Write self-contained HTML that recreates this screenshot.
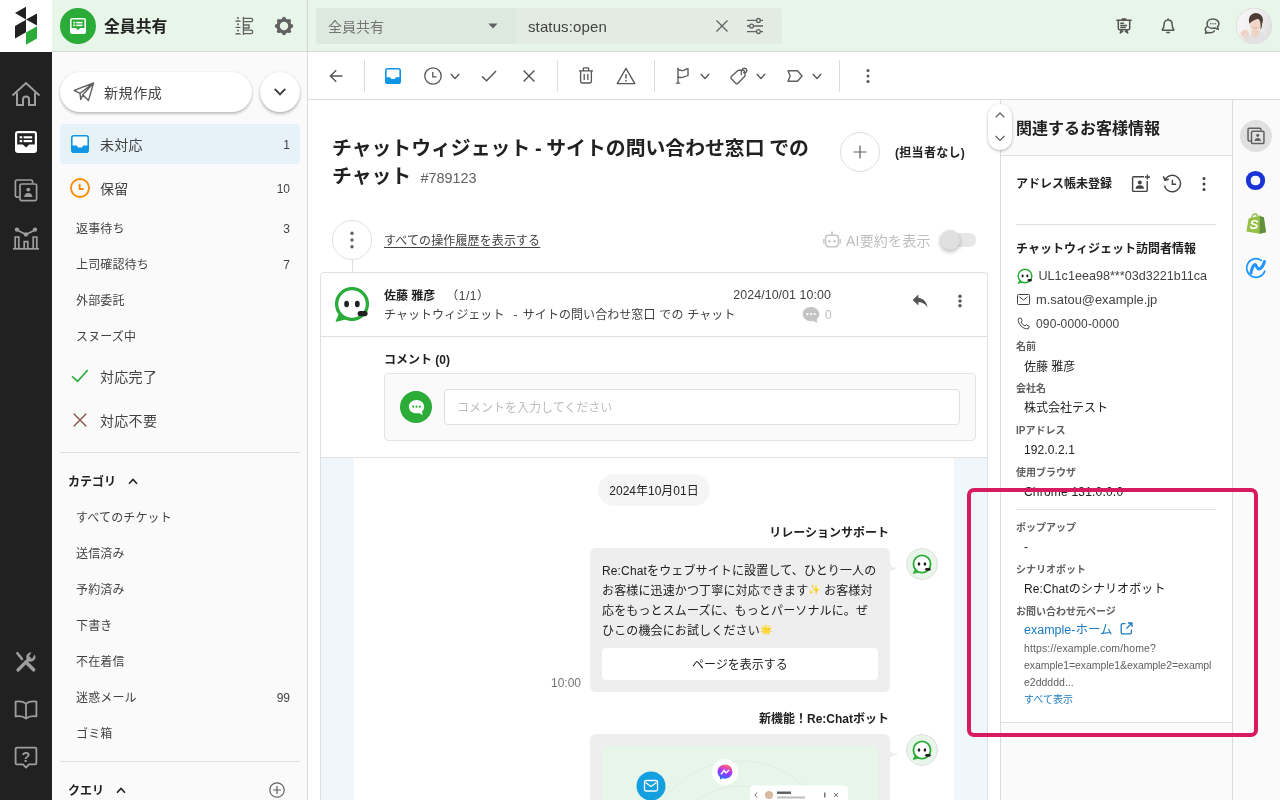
<!DOCTYPE html>
<html lang="ja">
<head>
<meta charset="utf-8">
<title>Re:lation</title>
<style>
*{box-sizing:border-box;margin:0;padding:0}
html,body{width:1280px;height:800px;overflow:hidden;background:#fff}
body{will-change:transform;font-family:"Liberation Sans","Noto Sans CJK JP",sans-serif;color:#212121;font-size:14px;position:relative}
.abs{position:absolute}
svg{display:block}
/* ---------- left rail ---------- */
#logo{left:0;top:0;width:52px;height:52px;background:#fff}
#rail{left:0;top:52px;width:52px;height:748px;background:#212121}
#rail svg{position:absolute;left:12px}
/* ---------- header ---------- */
#header{left:52px;top:0;width:1228px;height:52px;background:#e8f5e9;border-bottom:1px solid #d6d6d6}
#hdiv{left:307px;top:0;width:1px;height:52px;background:#d6d6d6}
#mbx-circle{left:60px;top:8px;width:36px;height:36px;border-radius:50%;background:#2bac38}
#mbx-name{left:104px;top:15px;font-size:15.850px;font-weight:700;line-height:24px;color:#212121}
#search{left:316px;top:8px;width:466px;height:36px;border-radius:4px;background:#e2ece3}
#search .sel{position:absolute;left:0;top:0;width:200px;height:36px;background:#dde8de;border-radius:4px 0 0 4px}
#search .sel span{position:absolute;left:12px;top:8px;font-size:14px;line-height:22px;color:#757575}
#search .q{position:absolute;left:212px;top:8px;font-size:15px;line-height:22px;color:#424242;letter-spacing:.12px}
/* ---------- sidebar ---------- */
#side{left:52px;top:52px;width:256px;height:748px;background:#fafafa;border-right:1px solid #dcdcdc}
#compose{left:8px;top:20px;width:192px;height:40px;border-radius:20px;background:#fff;box-shadow:0 2px 3px rgba(0,0,0,.22),0 0 2px rgba(0,0,0,.10)}
#compose span{position:absolute;left:44px;top:9.500px;font-size:14px;line-height:22px;color:#424242;letter-spacing:.6px}
#compose2{left:208px;top:20px;width:40px;height:40px;border-radius:50%;background:#fff;box-shadow:0 2px 3px rgba(0,0,0,.25),0 0 2px rgba(0,0,0,.10)}
.nav{position:absolute;left:8px;width:240px;height:40px;border-radius:4px}
.nav.sel{background:#e6f1f8}
.nav .t{position:absolute;left:40px;top:9.500px;font-size:14px;line-height:22px;color:#424242;letter-spacing:.3px}
.nav .c,.sub .c{position:absolute;right:10px;font-size:12px;color:#424242}
.nav .c{top:12px;line-height:18px}
.nav svg{position:absolute;left:8px;top:8px}
.sub{position:absolute;left:8px;width:240px;height:36px}
.sub .t{position:absolute;left:16px;top:9px;font-size:12px;letter-spacing:.15px;line-height:20px;color:#424242}
.sub .c{top:10px;line-height:18px}
.hr{position:absolute;left:8px;width:240px;height:1px;background:#e0e0e0}
.sec{position:absolute;left:16px;margin-top:1px;font-size:12px;font-weight:700;line-height:20px;color:#212121}
/* ---------- toolbar ---------- */
#tbar{left:308px;top:52px;width:972px;height:48px;background:#fff;border-bottom:1px solid #dcdcdc}
#tbar .v{position:absolute;top:8px;width:1px;height:32px;background:#dcdcdc}
#tbar svg{position:absolute}
/* ---------- main ---------- */
#main{left:308px;top:100px;width:693px;height:700px;background:#fff;overflow:hidden}
#title{left:24px;top:34px;width:500px;font-size:19.850px;word-spacing:-.8px;font-weight:700;line-height:28px;color:#212121}
#title small{font-size:14.400px;font-weight:400;color:#616161;margin-left:4.600px}

/* main details (coords relative to #main: left 308, top 100) */
#kebab{left:24px;top:120px;width:40px;height:40px;border:1px solid #e0e0e0;border-radius:50%;background:#fff}
#kline{left:44px;top:160px;width:1px;height:12px;background:#e0e0e0}
#hist{left:76px;top:132px;font-size:12px;letter-spacing:.12px;line-height:18px;color:#424242;text-decoration:underline;text-underline-offset:2px}
#plus{left:532px;top:32px;width:40px;height:40px;border:1px solid #e0e0e0;border-radius:50%;background:#fff}
#assignee{left:587px;top:44px;letter-spacing:.3px;font-size:12px;font-weight:700;line-height:18px;color:#212121;white-space:nowrap}
#ai{left:538px;top:130px;letter-spacing:.2px;font-size:14px;line-height:22px;color:#bdbdbd;white-space:nowrap}
#tog{left:632px;top:133px;width:36px;height:14px;border-radius:7px;background:#e6e6e6}
#knob{left:632px;top:130px;width:20px;height:20px;border-radius:50%;background:#e0e0e0;box-shadow:0 2px 4px rgba(0,0,0,.28)}
#card{left:12px;top:172px;width:668px;height:560px;border:1px solid #e0e0e0;border-radius:4px;background:#fff;overflow:hidden}
#card .hd{position:absolute;left:0;top:0;width:666px;height:64px;border-bottom:1px solid #e0e0e0}
#card .nm{position:absolute;left:63px;top:14px;font-size:12px;font-weight:700;line-height:18px;color:#212121;white-space:nowrap}
#card .nm i{font-style:normal;font-weight:400;color:#424242;margin-left:11px;letter-spacing:.5px}
#card .sj{position:absolute;left:63px;top:33px;letter-spacing:.06px;word-spacing:.5px;font-size:12px;line-height:18px;color:#424242;white-space:pre}
#card .dt{position:absolute;right:156px;top:13px;letter-spacing:.08px;font-size:12.400px;line-height:18px;color:#424242;white-space:nowrap}
#card .cn{position:absolute;left:504px;top:33px;font-size:12px;line-height:18px;color:#bdbdbd}
#card .cm{position:absolute;left:0;top:64px;width:666px;height:121px;border-bottom:1px solid #e0e0e0}
#card .cm b{position:absolute;left:63px;top:14px;font-size:12px;line-height:18px;color:#212121}
#cbox{left:63px;top:36px;width:592px;height:68px;border:1px solid #e4e4e4;border-radius:4px;background:#fafafa}
#cbox .g{position:absolute;left:15px;top:17px;width:32px;height:32px;border-radius:50%;background:#2bac38}
#cbox .in{position:absolute;left:59px;top:15px;width:516px;height:36px;border:1px solid #e0e0e0;border-radius:4px;background:#fff}
#cbox .in span{position:absolute;left:12px;top:9px;font-size:12px;line-height:18px;color:#bdbdbd}
#chat{left:0;top:185px;width:666px;height:380px;background:#eff7fd}
#chat .w{position:absolute;left:33px;top:0;width:600px;height:380px;background:#fff}
.pill{position:absolute;left:244px;top:16px;width:112px;height:32px;padding-top:1px;border-radius:16px;background:#f5f5f5;font-size:12px;line-height:32px;text-align:center;color:#212121}
.who{position:absolute;right:65px;margin-top:1px;font-size:12px;font-weight:700;line-height:18px;color:#212121;white-space:nowrap}
.bub{position:absolute;left:236px;width:300px;background:#eeeeee;border-radius:6px}
.bub p{position:absolute;left:12px;top:13px;width:280px;letter-spacing:.14px;font-size:12px;line-height:20px;color:#212121;white-space:nowrap}
.bub .btn{position:absolute;left:12px;top:100px;width:276px;height:32px;padding-top:1px;border-radius:4px;background:#fff;font-size:12px;line-height:32px;text-align:center;color:#212121}
.tm{position:absolute;left:197px;margin-top:1px;font-size:12px;line-height:18px;color:#757575}
.av{position:absolute;left:552px;width:32px;height:32px;border-radius:50%;background:#e8f5e9;border:1px solid #e0e0e0}
.em{font-size:10px;line-height:0;position:relative;top:-2px}
#pill2{left:988px;top:104px;width:24px;height:46px;border-radius:12px;background:#fff;box-shadow:0 1px 3px rgba(0,0,0,.3)}
/* ---------- right panel ---------- */
#rp{left:1000px;top:100px;width:233px;height:700px;background:#fafafa;border-left:1px solid #dcdcdc;border-right:1px solid #dcdcdc;overflow:hidden}
#rrail{left:1233px;top:100px;width:47px;height:700px;background:#fafafa}
.lbl{position:absolute;left:15px;margin-top:2px;font-size:10px;font-weight:700;line-height:14px;color:#616161}
.val{position:absolute;left:23px;margin-top:2px;font-size:12px;line-height:18px;color:#212121}

#rp .h{position:absolute;left:0;top:0;width:231px;height:56px;background:#fafafa;border-bottom:1px solid #e0e0e0}
#rp .h span{position:absolute;left:15px;top:17px;font-size:16px;font-weight:700;line-height:24px;color:#212121}
#rp .b{position:absolute;left:0;top:56px;width:231px;height:567px;background:#fff;border-bottom:1px solid #e0e0e0}
#rp .st{position:absolute;left:15px;margin-top:1.500px;font-size:12px;font-weight:700;line-height:18px;color:#212121;white-space:nowrap}
#rp .dv{position:absolute;left:15px;margin-top:1px;width:200px;height:1px;background:#e0e0e0}
#rp .row{position:absolute;left:35px;margin-top:2px;font-size:12px;line-height:18px;color:#424242;white-space:nowrap}
#rp svg{position:absolute;margin-top:1px}
#rp .lnk{position:absolute;left:23px;margin-top:2px;font-size:12.500px;line-height:18px;color:#1a7bc0;white-space:nowrap}
#rp .url{position:absolute;left:23px;top:484px;width:196px;font-size:10.500px;line-height:17.200px;color:#616161;white-space:nowrap}
#rp .all{position:absolute;left:23px;margin-top:2px;font-size:10px;line-height:14px;color:#1a7bc0}
#rrail svg{position:absolute}
#rrail .act{position:absolute;left:7px;top:20px;width:32px;height:32px;border-radius:50%;background:#e0e0e0}
#hl{left:967px;top:488px;width:291px;height:249px;border:4px solid #d81b60;border-radius:7px}
</style>
</head>
<body>
<!-- LOGO -->
<div id="logo" class="abs">
<svg width="52" height="52" viewBox="0 0 52 52">
<polygon points="15,13 26,6.8 26,19.5" fill="#212121"/>
<polygon points="26,19.6 37,13.4 37,25.4" fill="#212121"/>
<polygon points="15,26 26,19.8 26,32.2 15,38.4" fill="#212121"/>
<polygon points="26,32.5 37,26.3 37,38.5 26,44.7" fill="#2bac38"/>
</svg>
</div>
<div id="rail" class="abs">
<!-- home -->
<svg style="left:10px;top:28px" width="32" height="28" viewBox="0 0 32 28" fill="none" stroke="#9e9e9e" stroke-width="2" stroke-linejoin="miter">
<path d="M2.5 15.5 L16 3 L29.5 15.5"/><path d="M7 12.5 V25 H13 V19.5 a3 3 0 0 1 6 0 V25 H25 V12.5"/></svg>
<!-- inbox active -->
<svg style="left:15px;top:79px" width="22" height="22" viewBox="0 0 22 22">
<rect x="0" y="0" width="22" height="22" rx="3" fill="#fff"/>
<path d="M2.2 2.2 H19.8 V13.6 H14.2 L11 16.4 L7.8 13.6 H2.2 Z" fill="#212121"/>
<rect x="4.6" y="5.2" width="2.6" height="2.2" fill="#fff"/><rect x="8.6" y="5.2" width="8.6" height="2.2" fill="#fff"/>
<rect x="4.6" y="9" width="2.6" height="2.2" fill="#fff"/><rect x="8.6" y="9" width="8.6" height="2.2" fill="#fff"/>
</svg>
<!-- contacts -->
<svg style="left:14px;top:127px" width="24" height="23" viewBox="0 0 24 23" fill="none" stroke="#9e9e9e" stroke-width="1.7">
<path d="M5 18.2 H3 a1.6 1.6 0 0 1 -1.6 -1.6 V2.6 A1.6 1.6 0 0 1 3 1 H17 a1.6 1.6 0 0 1 1.6 1.6 V4"/>
<rect x="6" y="5" width="16.6" height="16.6" rx="1.6"/>
<circle cx="14.3" cy="10.6" r="1.9" fill="#9e9e9e" stroke="none"/><path d="M10.2 18 c0-2.6 1.8-4 4.1-4 s4.1 1.4 4.1 4 z" fill="#9e9e9e" stroke="none"/></svg>
<!-- analytics -->
<svg style="left:12px;top:174px" width="28" height="24" viewBox="0 0 28 24" fill="none" stroke="#9e9e9e" stroke-width="1.7">
<path d="M1 22.8 H27"/><path d="M5 4 L14 8.6 L23 4"/>
<circle cx="5" cy="3.6" r="2.2" fill="#9e9e9e" stroke="none"/><circle cx="14" cy="8.4" r="2.2" fill="#9e9e9e" stroke="none"/><circle cx="23" cy="3.6" r="2.2" fill="#9e9e9e" stroke="none"/>
<path d="M3.2 22 V11 H6.8 V22 M12.2 22 V15.6 H15.8 V22 M21.2 22 V11 H24.8 V22"/></svg>
<!-- tools -->
<svg style="left:15px;top:599px" width="22" height="22" viewBox="0 0 22 22" fill="none" stroke="#9e9e9e" stroke-linecap="round">
<path d="M3 19 L13.5 8.5" stroke-width="3.2"/><path d="M19.6 3.4 a4.6 4.6 0 1 1 -3 -1.9 L14 5 L17 8 Z" fill="#9e9e9e" stroke="none"/>
<path d="M2.4 2.2 L7 8" stroke-width="2.6"/><path d="M12.6 12.8 L18.6 18.8" stroke-width="3.6"/></svg>
<!-- book -->
<svg style="left:14px;top:647px" width="24" height="22" viewBox="0 0 24 22" fill="none" stroke="#9e9e9e" stroke-width="1.8" stroke-linejoin="round">
<path d="M12 4.6 C9.6 2.6 5.4 2 1.6 2.6 V17.4 C5.4 16.8 9.6 17.4 12 19.6 C14.4 17.4 18.6 16.8 22.4 17.4 V2.6 C18.6 2 14.4 2.6 12 4.6 Z M12 4.6 V19.6"/></svg>
<!-- help -->
<svg style="left:14px;top:694px" width="24" height="24" viewBox="0 0 24 24" fill="none" stroke="#9e9e9e" stroke-width="1.8" stroke-linejoin="round">
<path d="M3 1.6 H21 a1.4 1.4 0 0 1 1.4 1.4 V17 a1.4 1.4 0 0 1 -1.4 1.4 H15 L12 21.6 L9 18.4 H3 a1.4 1.4 0 0 1 -1.4 -1.4 V3 A1.4 1.4 0 0 1 3 1.6 Z"/>
<text x="12" y="15.500" text-anchor="middle" font-family="Liberation Sans, sans-serif" font-size="14.500" font-weight="700" fill="#9e9e9e" stroke="none">?</text></svg>
</div>
<div id="header" class="abs"></div>
<div id="hdiv" class="abs"></div>
<div id="mbx-circle" class="abs">
<svg style="position:absolute;left:10px;top:10px" width="16" height="16" viewBox="0 0 22 22">
<rect x="0" y="0" width="22" height="22" rx="3" fill="#fff"/>
<path d="M2.2 2.2 H19.8 V13.6 H14.2 L11 16.4 L7.8 13.6 H2.2 Z" fill="#2bac38"/>
<rect x="4.6" y="5.2" width="2.6" height="2.2" fill="#fff"/><rect x="8.6" y="5.2" width="8.6" height="2.2" fill="#fff"/>
<rect x="4.6" y="9" width="2.6" height="2.2" fill="#fff"/><rect x="8.6" y="9" width="8.6" height="2.2" fill="#fff"/>
</svg></div>
<div id="mbx-name" class="abs">全員共有</div>
<!-- sort icon -->
<svg class="abs" style="left:234px;top:16px" width="20" height="20" viewBox="0 0 20 20" fill="none" stroke="#616161" stroke-width="1.300">
<path d="M9.400 0.800 V19"/><path d="M10 2.300 H17 a1.700 1.700 0 0 1 0 3.400 H10"/><path d="M10 9 H15 V12 H10"/><path d="M10 14.200 H17 a1.700 1.700 0 0 1 0 3.400 H10"/>
<g fill="#616161" stroke="none"><circle cx="4" cy="1.900" r="1"/><path d="M1 5.700 C1.400 3.800 6.600 3.800 7 5.700 Z"/><circle cx="4" cy="8.300" r="1"/><path d="M1 12.100 C1.400 10.200 6.600 10.200 7 12.100 Z"/><circle cx="4" cy="14.600" r="1"/><path d="M1 18.400 C1.400 16.500 6.600 16.500 7 18.400 Z"/></g></svg>
<!-- gear -->
<svg class="abs" style="left:274px;top:16px" width="20" height="20" viewBox="0 0 20 20"><circle cx="10" cy="10" r="5.900" fill="none" stroke="#616161" stroke-width="3.400"/><g fill="#616161"><circle cx="10.00" cy="2.70" r="1.900"/><circle cx="15.16" cy="4.84" r="1.900"/><circle cx="17.30" cy="10.00" r="1.900"/><circle cx="15.16" cy="15.16" r="1.900"/><circle cx="10.00" cy="17.30" r="1.900"/><circle cx="4.84" cy="15.16" r="1.900"/><circle cx="2.70" cy="10.00" r="1.900"/><circle cx="4.84" cy="4.84" r="1.900"/></g></svg>
<div id="search" class="abs"><div class="sel"><span>全員共有</span>
<svg style="position:absolute;left:172px;top:15px" width="10" height="6" viewBox="0 0 10 6"><path d="M0.4 0.4 H9.6 L5 5.4 Z" fill="#616161"/></svg></div><div class="q">status:open</div>
<svg style="position:absolute;left:399px;top:11px" width="14" height="14" viewBox="0 0 14 14" fill="none" stroke="#616161" stroke-width="1.3"><path d="M1.5 1.5 L12.5 12.5 M12.5 1.5 L1.5 12.5"/></svg>
<svg style="position:absolute;left:430px;top:9px" width="18" height="18" viewBox="0 0 18 18" fill="none" stroke="#616161" stroke-width="1.3"><path d="M1 3.4 H17 M1 9 H17 M1 14.6 H17"/><circle cx="12.4" cy="3.4" r="1.9" fill="#e2ece3"/><circle cx="5.6" cy="9" r="1.9" fill="#e2ece3"/><circle cx="12.4" cy="14.6" r="1.9" fill="#e2ece3"/></svg>
</div>
<!-- presentation -->
<svg class="abs" style="left:1116px;top:18px" width="16" height="16" viewBox="0 0 18 18" fill="none" stroke="#555" stroke-width="1.7" stroke-linejoin="round" stroke-linecap="round">
<path d="M1 2.6 H17 M7 1 H11"/><path d="M2.6 2.8 V11.6 a1.6 1.6 0 0 0 1.6 1.6 H13.800 a1.600 1.600 0 0 0 1.600 -1.600 V2.800"/><path d="M5.400 6 H8.400 M5.400 8.400 H11.800 M5.400 10.800 H10.400"/><path d="M6.200 13.400 L4.800 16.800 L7.400 15 M11.800 13.400 L13.200 16.800 L10.600 15"/></svg>
<!-- bell -->
<svg class="abs" style="left:1161px;top:18px" width="14.2" height="16" viewBox="0 0 16 18" fill="none" stroke="#555" stroke-width="1.7" stroke-linejoin="round" stroke-linecap="round">
<path d="M8 1.200 V2.200 M8 2.200 C4.800 2.200 3.400 4.800 3.400 7.400 C3.400 10.600 2.600 12 1.600 13 V13.800 H14.400 V13 C13.400 12 12.600 10.600 12.600 7.400 C12.600 4.800 11.200 2.200 8 2.200 Z M6.600 16.400 H9.400"/></svg>
<!-- chat -->
<svg class="abs" style="left:1204px;top:18px" width="16" height="16" viewBox="0 0 18 18" fill="none" stroke="#555" stroke-width="1.7" stroke-linejoin="round" stroke-linecap="round">
<path d="M10 1.200 C6 1.200 3.400 3.600 3.400 6.400 C3.400 9.200 6 11.600 10 11.600 C10.800 11.600 11.600 11.500 12.300 11.300 L16 12.800 L15.200 9.800 C16.200 8.900 16.800 7.700 16.800 6.400 C16.800 3.600 14 1.200 10 1.200 Z"/>
<path d="M3.600 9.600 C2.200 10.400 1.400 11.600 1.400 12.900 C1.400 13.800 1.800 14.600 2.400 15.300 L1.600 17.200 L4.600 16.400 C5.300 16.600 6 16.700 6.800 16.700 C9 16.700 10.800 15.900 11.600 14.400"/>
<circle cx="7.400" cy="6.400" r="0.900" fill="#616161" stroke="none"/><circle cx="10.100" cy="6.400" r="0.900" fill="#616161" stroke="none"/><circle cx="12.800" cy="6.400" r="0.900" fill="#616161" stroke="none"/></svg>
<!-- avatar -->
<svg class="abs" style="left:1236px;top:8px" width="36" height="36" viewBox="0 0 36 36">
<defs><clipPath id="avc"><circle cx="18" cy="18" r="17.400"/></clipPath><linearGradient id="avg" x1="0" y1="0" x2="1" y2="0.300"><stop offset="0" stop-color="#f6f6f6"/><stop offset="0.550" stop-color="#f1f1f1"/><stop offset="1" stop-color="#e2e2e2"/></linearGradient><filter id="avb" x="-10%" y="-10%" width="120%" height="120%"><feGaussianBlur stdDeviation="0.550"/></filter></defs>
<circle cx="18" cy="18" r="18" fill="#dcd6d8"/>
<g clip-path="url(#avc)"><rect width="36" height="36" fill="url(#avg)"/>
<g filter="url(#avb)">
<path d="M6 36 C7 29 11 26.500 15.500 25.500 L19.500 30 L23.500 24.800 C28 25.800 31 29 32 36 Z" fill="#e3e1e4"/>
<path d="M15.200 22 L23.600 22 L23.600 25.500 L19.500 30.400 L15.400 26 Z" fill="#efd3c3"/>
<ellipse cx="19.900" cy="12" rx="7.100" ry="6.900" fill="#4e3c35"/>
<ellipse cx="19.200" cy="16.400" rx="5.500" ry="6.600" fill="#f0d6c8"/>
<path d="M13.300 13.400 C14.500 9.200 20.500 7.200 26 10.600 C23.500 10.200 18.500 11 13.600 15.400 Z" fill="#4e3c35"/>
<path d="M24.600 13 C26.600 15 26.400 19.500 24.400 21.600 C24.800 19 24.800 16 24.600 13 Z" fill="#4e3c35"/>
<path d="M16.800 19.400 C18.200 20.600 20.400 20.600 21.800 19.400" fill="none" stroke="#d89a8c" stroke-width="0.700"/>
<ellipse cx="8.800" cy="25.600" rx="4.200" ry="3.600" transform="rotate(-35 8.800 25.600)" fill="#efd3c3"/>
<path d="M7 28 C8 30 10 32 12.500 33 L14 30 C12 28.500 11 27 10.500 25.500 Z" fill="#e9dcd8"/>
</g></g></svg>
<div id="side" class="abs">
<div id="compose" class="abs"><svg style="position:absolute;left:13px;top:10px" width="22" height="20" viewBox="0 0 22 20" fill="none" stroke="#616161" stroke-width="1.400" stroke-linejoin="round"><path d="M1.200 8.400 L20.600 1 L15.400 18.600 L9.800 12.800 L7.800 17.600 L7 11.400 Z M7 11.400 L20.600 1 L9.800 12.800"/></svg><span>新規作成</span></div>
<div id="compose2" class="abs"><svg style="position:absolute;left:14px;top:16px" width="12" height="8" viewBox="0 0 12 8" fill="none" stroke="#424242" stroke-width="1.900"><path d="M0.800 1 L6 6.400 L11.200 1"/></svg></div>
<div class="nav sel" style="top:72px"><svg style="left:11px;top:11px" width="18" height="18" viewBox="0 0 18 18"><rect x="0.800" y="0.800" width="16.400" height="16.400" rx="2" fill="#fff" stroke="#1096e4" stroke-width="1.600"/><path d="M0.800 10.400 H5.600 L7.200 12.400 H10.800 L12.400 10.400 H17.200 V15.200 a2 2 0 0 1 -2 2 H2.800 a2 2 0 0 1 -2 -2 Z" fill="#1096e4"/></svg><span class="t">未対応</span><span class="c">1</span></div>
<div class="nav" style="top:116px"><svg style="left:10px;top:10px" width="20" height="20" viewBox="0 0 20 20" fill="none" stroke="#fb8c00" stroke-width="1.900"><circle cx="10" cy="10" r="9"/><path d="M9.600 5.800 V11 H13.600" stroke-width="1.900"/></svg><span class="t">保留</span><span class="c">10</span></div>
<div class="sub" style="top:158px"><span class="t">返事待ち</span><span class="c">3</span></div>
<div class="sub" style="top:194px"><span class="t">上司確認待ち</span><span class="c">7</span></div>
<div class="sub" style="top:230px"><span class="t">外部委託</span></div>
<div class="sub" style="top:266px"><span class="t">スヌーズ中</span></div>
<div class="nav" style="top:304px"><svg style="left:11px;top:13px" width="18" height="14" viewBox="0 0 18 14" fill="none" stroke="#2bac38" stroke-width="1.700"><path d="M1 7.400 L6.600 12.400 L16.800 1"/></svg><span class="t">対応完了</span></div>
<div class="nav" style="top:348px"><svg style="left:13px;top:13px" width="14" height="14" viewBox="0 0 14 14" fill="none" stroke="#8d5a4a" stroke-width="1.500"><path d="M0.800 0.800 L13.200 13.200 M13.200 0.800 L0.800 13.200"/></svg><span class="t">対応不要</span></div>
<div class="hr" style="top:400px"></div>
<div class="sec" style="top:419px">カテゴリ<svg style="display:inline-block;margin-left:12px;vertical-align:1px" width="10" height="7" viewBox="0 0 10 7" fill="none" stroke="#212121" stroke-width="1.600"><path d="M1 5.800 L5 1.400 L9 5.800"/></svg></div>
<div class="sub" style="top:447px"><span class="t">すべてのチケット</span></div>
<div class="sub" style="top:483px"><span class="t">送信済み</span></div>
<div class="sub" style="top:519px"><span class="t">予約済み</span></div>
<div class="sub" style="top:555px"><span class="t">下書き</span></div>
<div class="sub" style="top:591px"><span class="t">不在着信</span></div>
<div class="sub" style="top:627px"><span class="t">迷惑メール</span><span class="c">99</span></div>
<div class="sub" style="top:663px"><span class="t">ゴミ箱</span></div>
<div class="hr" style="top:709px"></div>
<div class="sec" style="top:728px">クエリ<svg style="display:inline-block;margin-left:12px;vertical-align:1px" width="10" height="7" viewBox="0 0 10 7" fill="none" stroke="#212121" stroke-width="1.600"><path d="M1 5.800 L5 1.400 L9 5.800"/></svg></div>
<svg class="abs" style="left:217px;top:730px" width="16" height="16" viewBox="0 0 16 16" fill="none" stroke="#616161" stroke-width="1.200"><circle cx="8" cy="8" r="7.200"/><path d="M8 4 V12 M4 8 H12"/></svg>
</div>
<div id="tbar" class="abs">
<svg style="left:21px;top:17px" width="14" height="14" viewBox="0 0 14 14" fill="none" stroke="#555" stroke-width="1.400"><path d="M13.400 7 H1.600 M7.200 1.200 L1.400 7 L7.200 12.800"/></svg>
<div class="v" style="left:56px"></div>
<svg style="left:77px;top:16px" width="16" height="16" viewBox="0 0 18 18"><rect x="0.900" y="0.900" width="16.200" height="16.200" rx="2" fill="#fff" stroke="#1096e4" stroke-width="1.800"/><path d="M0.900 10.400 H5.600 L7.200 12.400 H10.800 L12.400 10.400 H17.100 V15.100 a2 2 0 0 1 -2 2 H2.900 a2 2 0 0 1 -2 -2 Z" fill="#1096e4"/></svg>
<svg style="left:116px;top:15px" width="18" height="18" viewBox="0 0 18 18" fill="none" stroke="#555" stroke-width="1.300"><circle cx="9" cy="9" r="8.200"/><path d="M8.800 5 V9.800 H12.600"/></svg>
<svg style="left:142px;top:21px" width="10" height="7" viewBox="0 0 10 7" fill="none" stroke="#555" stroke-width="1.400"><path d="M0.800 1 L5 5.400 L9.200 1"/></svg>
<svg style="left:173px;top:18px" width="16" height="12" viewBox="0 0 16 12" fill="none" stroke="#555" stroke-width="1.400"><path d="M1 6.400 L5.600 10.800 L15 1"/></svg>
<svg style="left:215px;top:18px" width="12" height="12" viewBox="0 0 12 12" fill="none" stroke="#555" stroke-width="1.400"><path d="M0.600 0.600 L11.400 11.400 M11.400 0.600 L0.600 11.400"/></svg>
<div class="v" style="left:249px"></div>
<svg style="left:270px;top:15px" width="16" height="17" viewBox="0 0 16 17" fill="none" stroke="#555" stroke-width="1.300" stroke-linejoin="round"><path d="M1 3.800 H15 M5.400 3.600 V1.600 a0.800 0.800 0 0 1 0.800 -0.800 H9.800 a0.800 0.800 0 0 1 0.800 0.800 V3.600 M2.600 4 V14.600 a1.400 1.400 0 0 0 1.400 1.400 H12 a1.400 1.400 0 0 0 1.400 -1.400 V4 M6.200 7 V13 M9.800 7 V13"/></svg>
<svg style="left:308px;top:15px" width="20" height="18" viewBox="0 0 20 18" fill="none" stroke="#555" stroke-width="1.300" stroke-linejoin="round"><path d="M10 1.400 L18.800 16.600 H1.200 Z"/><path d="M10 7.200 V11.400" stroke-width="1.500"/><circle cx="10" cy="13.800" r="0.900" fill="#555" stroke="none"/></svg>
<div class="v" style="left:346px"></div>
<svg style="left:367px;top:15px" width="15" height="17" viewBox="0 0 15 17" fill="none" stroke="#5f5f5f" stroke-width="1.400" stroke-linejoin="round" stroke-linecap="round"><path d="M3 1.200 V16 M1.300 16.100 H4.700"/><path d="M3 2.400 C5 3.400 7 4 8.500 3.400 C10 2.800 11.500 2 13 1.800 V8.600 C11.500 8.800 10 9.600 8.500 10.200 C7 10.800 5 10.600 3 10"/></svg>
<svg style="left:392px;top:21px" width="10" height="7" viewBox="0 0 10 7" fill="none" stroke="#555" stroke-width="1.400"><path d="M0.800 1 L5 5.400 L9.200 1"/></svg>
<svg style="left:422px;top:15px" width="19" height="18" viewBox="0 0 19 18" fill="none" stroke="#5f5f5f" stroke-width="1.400" stroke-linejoin="round" stroke-linecap="round"><path d="M1.400 9.600 L7.600 3.800 Q8.200 3.300 9 3.300 H13.200 Q14.300 3.300 14.500 4.400 L15.100 8 Q15.200 8.800 14.600 9.400 L7.600 16.400 Q6.800 17.200 6 16.400 L1.400 11.800 Q0.400 10.700 1.400 9.600 Z"/><path d="M11.400 7.600 C10.600 4.600 12.200 1.200 14.600 1.200 C16.600 1.200 17.300 3.200 16.500 4.600 C15.900 5.700 14.700 6 13.700 5.500"/></svg>
<svg style="left:448px;top:21px" width="10" height="7" viewBox="0 0 10 7" fill="none" stroke="#555" stroke-width="1.400"><path d="M0.800 1 L5 5.400 L9.200 1"/></svg>
<svg style="left:479px;top:18px" width="16" height="12" viewBox="0 0 16 12" fill="none" stroke="#5f5f5f" stroke-width="1.400" stroke-linejoin="round"><path d="M1 0.800 H10.600 L15 6 L10.600 11.200 H1 L3.200 6 Z"/></svg>
<svg style="left:504px;top:21px" width="10" height="7" viewBox="0 0 10 7" fill="none" stroke="#555" stroke-width="1.400"><path d="M0.800 1 L5 5.400 L9.200 1"/></svg>
<div class="v" style="left:531px"></div>
<svg style="left:558px;top:16px" width="4" height="16" viewBox="0 0 4 16" fill="#555"><circle cx="2" cy="2.600" r="1.500"/><circle cx="2" cy="8" r="1.500"/><circle cx="2" cy="13.400" r="1.500"/></svg>
</div>
<div id="main" class="abs">
<div id="title" class="abs">チャットウィジェット - サイトの問い合わせ窓口 での<br>チャット <small>#789123</small></div>
<div id="plus" class="abs"><svg style="position:absolute;left:12px;top:12px" width="14" height="14" viewBox="0 0 14 14" fill="none" stroke="#616161" stroke-width="1.200"><path d="M7 0.500 V13.500 M0.500 7 H13.500"/></svg></div>
<div id="assignee" class="abs">(担当者なし)</div>
<div id="kebab" class="abs"><svg style="position:absolute;left:17px;top:10px" width="4" height="18" viewBox="0 0 4 18" fill="#616161"><circle cx="2" cy="2.300" r="1.700"/><circle cx="2" cy="9" r="1.700"/><circle cx="2" cy="15.700" r="1.700"/></svg></div>
<div id="kline" class="abs"></div>
<div id="hist" class="abs">すべての操作履歴を表示する</div>
<svg class="abs" style="left:515px;top:131px" width="18" height="18" viewBox="0 0 18 18" fill="none" stroke="#c4c4c4" stroke-width="1.400"><path d="M9 0.800 V4"/><circle cx="9" cy="1.400" r="1" fill="#c4c4c4" stroke="none"/><rect x="2.600" y="4.200" width="12.800" height="11.600" rx="3"/><path d="M0.800 8 V12.400 M17.200 8 V12.400"/><circle cx="6.400" cy="10.200" r="1.200" fill="#c4c4c4" stroke="none"/><circle cx="11.600" cy="10.200" r="1.200" fill="#c4c4c4" stroke="none"/></svg>
<div id="ai" class="abs">AI要約を表示</div>
<div id="tog" class="abs"></div><div id="knob" class="abs"></div>
<div id="card" class="abs">
<div class="hd">
<div style="position:absolute;left:13px;top:13px"><svg width="36" height="36" viewBox="0 0 36 36"><path d="M6.200 26.500 L2.400 35 L13.500 32.200 Z" fill="#2bac38" stroke="#2bac38" stroke-width="1.400" stroke-linejoin="round"/><circle cx="18" cy="18" r="15.400" fill="#fff" stroke="#2bac38" stroke-width="3.300"/><ellipse cx="12.600" cy="18" rx="2.400" ry="3.200" fill="#212121"/><ellipse cx="23.300" cy="18" rx="2.400" ry="3.200" fill="#212121"/><rect x="23.600" y="25" width="10" height="5.200" rx="2.600" fill="#212121"/></svg></div>
<div class="nm">佐藤 雅彦<i>（1/1）</i></div>
<div class="sj">チャットウィジェット<span style="letter-spacing:.7px">  - </span>サイトの問い合わせ窓口 での チャット</div>
<div class="dt">2024/10/01 10:00</div>
<svg style="position:absolute;left:481px;top:33px" width="18" height="18" viewBox="0 0 16 16"><path d="M8 0.800 C3.800 0.800 0.600 3.600 0.600 7.200 C0.600 10.800 3.800 13.600 8 13.600 C8.800 13.600 9.600 13.500 10.300 13.300 L13.600 15.400 L13 12 C14.500 10.800 15.400 9.100 15.400 7.200 C15.400 3.600 12.200 0.800 8 0.800 Z" fill="#c4c4c4"/><circle cx="4.800" cy="7.200" r="1" fill="#fff"/><circle cx="8" cy="7.200" r="1" fill="#fff"/><circle cx="11.200" cy="7.200" r="1" fill="#fff"/></svg>
<div class="cn">0</div>
<svg style="position:absolute;left:591px;top:21px" width="16" height="14" viewBox="0 0 16 14"><path d="M6.400 0.600 L0.600 6 L6.400 11.400 V8.200 C10.400 8.200 13.200 9.600 15.400 13.400 C14.800 8.400 12 4.600 6.400 3.800 Z" fill="#555"/></svg>
<svg style="position:absolute;left:637px;top:19.500px" width="4" height="16" viewBox="0 0 4 16" fill="#555"><circle cx="2" cy="3.200" r="1.700"/><circle cx="2" cy="8" r="1.700"/><circle cx="2" cy="12.800" r="1.700"/></svg>
</div>
<div class="cm"><b>コメント (0)</b>
<div id="cbox" class="abs"><div class="g"><svg style="position:absolute;left:7.500px;top:7.500px" width="17" height="17" viewBox="0 0 16 16"><path d="M8 1 C3.800 1 0.800 3.800 0.800 7.200 C0.800 10.600 3.800 13.400 8 13.400 C8.800 13.400 9.600 13.300 10.300 13.100 L13.800 15 L13.200 11.700 C14.500 10.600 15.200 9 15.200 7.200 C15.200 3.800 12.200 1 8 1 Z" fill="#fff"/><circle cx="4.900" cy="7.200" r="1" fill="#2bac38"/><circle cx="8" cy="7.200" r="1" fill="#2bac38"/><circle cx="11.100" cy="7.200" r="1" fill="#2bac38"/></svg></div>
<div class="in"><span>コメントを入力してください</span></div></div>
</div>
<div id="chat" class="abs"><div class="w">
<div class="pill">2024年10月01日</div>
<div class="who" style="top:65px">リレーションサポート</div>
<div class="bub" style="top:90px;height:144px"><p>Re:Chatをウェブサイトに設置して、ひとり一人の<br>お客様に迅速かつ丁寧に対応できます<span class="em">✨</span> お客様対<br>応をもっとスムーズに、もっとパーソナルに。ぜ<br>ひこの機会にお試しください<span class="em">🌟</span></p><div class="btn">ページを表示する</div></div>
<svg style="position:absolute;left:535px;top:104px" width="10" height="10" viewBox="0 0 10 10"><path d="M0 0 H1 C1 4 4 6.500 9 5 C6 8.500 2 9 0 8.500 Z" fill="#eeeeee"/></svg>
<div class="av" style="top:90px"><div style="position:absolute;left:5px;top:5px"><svg width="20" height="20" viewBox="0 0 36 36"><path d="M6.200 26.500 L2.400 35 L13.500 32.200 Z" fill="#2bac38" stroke="#2bac38" stroke-width="1.400" stroke-linejoin="round"/><circle cx="18" cy="18" r="15.400" fill="#fff" stroke="#2bac38" stroke-width="3.300"/><ellipse cx="12.600" cy="18" rx="2.400" ry="3.200" fill="#212121"/><ellipse cx="23.300" cy="18" rx="2.400" ry="3.200" fill="#212121"/><rect x="23.600" y="25" width="10" height="5.200" rx="2.600" fill="#212121"/></svg></div></div>
<div class="tm" style="top:215px">10:00</div>
<div class="who" style="top:251px">新機能！Re:Chatボット</div>
<div class="bub" style="top:276px;height:120px">
<div style="position:absolute;left:12px;top:12px;width:276px;height:100px;background:#e8f5e9;overflow:hidden">
<svg width="276" height="100" viewBox="0 0 276 100"><circle cx="138" cy="110" r="95" fill="none" stroke="#dfeee0" stroke-width="1"/><circle cx="138" cy="110" r="70" fill="none" stroke="#dfeee0" stroke-width="1"/>
<circle cx="49" cy="40" r="14.500" fill="#139fe0"/><rect x="42.500" y="34.500" width="13" height="10.500" rx="1.500" fill="none" stroke="#fff" stroke-width="1.300"/><path d="M43.500 36.500 L49 40.500 L54.500 36.500" fill="none" stroke="#fff" stroke-width="1.300"/>
<circle cx="123" cy="26" r="13" fill="#fff"/><defs><linearGradient id="msg" x1="0" y1="1" x2="0.300" y2="0"><stop offset="0" stop-color="#0a7cff"/><stop offset="0.600" stop-color="#a033ff"/><stop offset="1" stop-color="#ff5c87"/></linearGradient></defs><path transform="translate(0,1)" d="M123 17.600 C118.800 17.600 115.600 20.700 115.600 24.800 C115.600 27 116.500 28.800 118 30.100 V32.600 L120.400 31.300 C121.200 31.500 122.100 31.700 123 31.700 C127.200 31.700 130.400 28.600 130.400 24.800 C130.400 20.700 127.200 17.600 123 17.600 Z" fill="url(#msg)"/><path d="M119 28.300 L122 24.500 L124 27 L127 24" fill="none" stroke="#fff" stroke-width="1.500"/>
<rect x="148" y="39.500" width="98" height="30" rx="4" fill="#fff"/><circle cx="167" cy="49" r="4" fill="#d9b9a0"/><rect x="175" y="45.500" width="14" height="2.500" fill="#616161"/><rect x="175" y="50.500" width="28" height="2" fill="#bdbdbd"/><path d="M155 46.500 L153 49 L155 51.500" fill="none" stroke="#757575" stroke-width="1"/><path d="M232 47 L236 51 M236 47 L232 51" stroke="#757575" stroke-width="1" fill="none"/><rect x="222" y="46.500" width="1.500" height="5" fill="#757575"/>
</svg></div></div>
<svg style="position:absolute;left:535px;top:290px" width="10" height="10" viewBox="0 0 10 10"><path d="M0 0 H1 C1 4 4 6.500 9 5 C6 8.500 2 9 0 8.500 Z" fill="#eeeeee"/></svg>
<div class="av" style="top:276px"><div style="position:absolute;left:5px;top:5px"><svg width="20" height="20" viewBox="0 0 36 36"><path d="M6.200 26.500 L2.400 35 L13.500 32.200 Z" fill="#2bac38" stroke="#2bac38" stroke-width="1.400" stroke-linejoin="round"/><circle cx="18" cy="18" r="15.400" fill="#fff" stroke="#2bac38" stroke-width="3.300"/><ellipse cx="12.600" cy="18" rx="2.400" ry="3.200" fill="#212121"/><ellipse cx="23.300" cy="18" rx="2.400" ry="3.200" fill="#212121"/><rect x="23.600" y="25" width="10" height="5.200" rx="2.600" fill="#212121"/></svg></div></div>
</div></div>
</div>
</div>
<div id="rp" class="abs">
<div class="h"><span>関連するお客様情報</span></div>
<div class="b">
<div class="st" style="top:17px">アドレス帳未登録</div>
<svg style="left:129.700px;top:17px" width="20" height="19" viewBox="0 0 20 19" fill="none" stroke="#424242" stroke-width="1.400"><path d="M13 2.800 H2.600 a1 1 0 0 0 -1 1 V16.400 a1 1 0 0 0 1 1 H15.200 a1 1 0 0 0 1 -1 V7"/><circle cx="8.800" cy="8.400" r="2" fill="#424242" stroke="none"/><path d="M4.600 14.800 c0 -2.600 1.800 -3.600 4.200 -3.600 s4.200 1 4.200 3.600 z" fill="#424242" stroke="none"/><path d="M16.400 0.400 V5.600 M13.800 3 H19" stroke-width="1.300"/></svg>
<svg style="left:160.700px;top:17px" width="20" height="19" viewBox="0 0 20 19" fill="none" stroke="#424242" stroke-width="1.400"><path d="M3.200 5.400 A8.200 8.200 0 1 1 2.400 11.600"/><path d="M1.400 2.200 L2.800 6.200 L6.800 5.200" stroke-linejoin="round"/><path d="M10.400 5.800 V10.200 H14" /></svg>
<svg style="left:200.500px;top:19px" width="4" height="16" viewBox="0 0 4 16" fill="#424242"><circle cx="2" cy="2.400" r="1.500"/><circle cx="2" cy="8" r="1.500"/><circle cx="2" cy="13.600" r="1.500"/></svg>
<div class="dv" style="top:67px"></div>
<div class="st" style="top:82px">チャットウィジェット訪問者情報</div>
<svg style="left:16px;top:110.500px" width="16" height="16" viewBox="0 0 36 36"><path d="M6.200 26.500 L2.400 35 L13.500 32.200 Z" fill="#2bac38" stroke="#2bac38" stroke-width="1.400" stroke-linejoin="round"/><circle cx="18" cy="18" r="15.400" fill="#fff" stroke="#2bac38" stroke-width="3.300"/><ellipse cx="12.600" cy="18" rx="2.400" ry="3.200" fill="#212121"/><ellipse cx="23.300" cy="18" rx="2.400" ry="3.200" fill="#212121"/><rect x="23.600" y="25" width="10" height="5.200" rx="2.600" fill="#212121"/></svg>
<div class="row" style="top:109px;left:37.500px;font-size:12.600px">UL1c1eea98***03d3221b11ca</div>
<svg style="left:16px;top:137px" width="13" height="11" viewBox="0 0 13 11" fill="none" stroke="#424242" stroke-width="1"><rect x="0.500" y="0.500" width="12" height="10" rx="1"/><path d="M2.400 2.800 L6.500 6 L10.600 2.800"/></svg>
<div class="row" style="top:133px;font-size:12.900px">m.satou@example.jp</div>
<svg style="left:16px;top:160px" width="13" height="13" viewBox="0 0 13 13" fill="none" stroke="#424242" stroke-width="1"><path d="M3.600 0.800 L1.400 1.600 C0.600 4 2 7 4 9 C6 11 9 12.400 11.400 11.600 L12.200 9.400 L9.400 7.800 L8 9 C6.600 8.400 4.600 6.400 4 5 L5.200 3.600 Z" stroke-linejoin="round"/></svg>
<div class="row" style="top:157px;letter-spacing:.15px">090-0000-0000</div>
<div class="lbl" style="top:182px">名前</div><div class="val" style="top:200px">佐藤 雅彦</div><div class="lbl" style="top:224px">会社名</div><div class="val" style="top:241px">株式会社テスト</div><div class="lbl" style="top:266px">IPアドレス</div><div class="val" style="top:283px;letter-spacing:.1px">192.0.2.1</div><div class="lbl" style="top:308px">使用ブラウザ</div><div class="val" style="top:325px;letter-spacing:.2px">Chrome 131.0.0.0</div>
<div class="dv" style="top:352px"></div>
<div class="lbl" style="top:363px">ポップアップ</div><div class="val" style="top:380px">-</div><div class="lbl" style="top:405px">シナリオボット</div><div class="val" style="top:422px;letter-spacing:.1px">Re:Chatのシナリオボット</div><div class="lbl" style="top:447px">お問い合わせ元ページ</div>
<div class="lnk" style="top:463px">example-ホーム</div>
<svg style="left:118.500px;top:465px" width="13" height="13" viewBox="0 0 13 13" fill="none" stroke="#1a7bc0" stroke-width="1.300" stroke-linejoin="round"><path d="M5.600 1.600 H2.600 a1.400 1.400 0 0 0 -1.400 1.400 V10.400 a1.400 1.400 0 0 0 1.400 1.400 H10 a1.400 1.400 0 0 0 1.400 -1.400 V7.400"/><path d="M8 1 H12 V5 M12 1 L6.400 6.600"/></svg>
<div class="url"><span style="letter-spacing:.12px">https://example.com/home?</span><br><span style="letter-spacing:-.07px">example1=example1&amp;example2=exampl</span><br>e2ddddd...</div>
<div class="all" style="top:535px">すべて表示</div>
</div>
</div>
<div id="rrail" class="abs">
<div class="act"><svg style="left:7px;top:7px" width="18" height="18" viewBox="0 0 24 23" fill="none" stroke="#616161" stroke-width="2"><path d="M5 18.200 H3 a1.600 1.600 0 0 1 -1.600 -1.600 V2.600 A1.600 1.600 0 0 1 3 1 H17 a1.600 1.600 0 0 1 1.600 1.600 V4"/><rect x="6" y="5" width="16.600" height="16.600" rx="1.600"/><circle cx="14.300" cy="10.600" r="2.100" fill="#616161" stroke="none"/><path d="M10 18.200 c0-2.800 1.800-4.200 4.300-4.200 s4.300 1.400 4.300 4.200 z" fill="#616161" stroke="none"/></svg></div>
<svg style="left:11px;top:69px" width="23" height="23" viewBox="0 0 23 23"><path d="M11.500 4.300 C15.600 4.300 18.700 7 18.700 11.500 C18.700 16 15.600 18.700 11.500 18.700 C7.400 18.700 4.300 16 4.300 11.500 C4.300 7 7.400 4.300 11.500 4.300 Z" fill="none" stroke="#1a34d8" stroke-width="4.800"/></svg>
<svg style="left:13px;top:113px" width="21" height="22" viewBox="0 0 21 22"><path d="M2.600 5.400 L14 2.600 L15.500 3.800 L17.800 4.200 L20 19.200 L13.600 20.800 L0.400 18.600 Z" fill="#95bf47"/><path d="M14 2.600 L15.500 3.800 L17.800 4.200 L20 19.200 L13.600 20.800 Z" fill="#5e8e3e"/><path d="M5.600 5 C6 2.600 7.600 1 9.200 1 C10.600 1 11.400 2.200 11.600 3.400" fill="none" stroke="#95bf47" stroke-width="1.300"/><text x="3.600" y="16.200" font-family="Liberation Sans, sans-serif" font-size="13.500" font-weight="700" font-style="italic" fill="#fff">S</text></svg>
<svg style="left:12px;top:157px" width="22" height="22" viewBox="0 0 22 22" fill="none" stroke="#1e96ff" stroke-linecap="round" stroke-linejoin="round"><path d="M16.330 3.380 A9.300 9.300 0 1 0 19.740 14.180" stroke-width="1.700"/><path d="M6 16 C6.500 12 8.500 7.500 10 7.500 C11.500 7.500 12 12.500 14 12 C16 11.500 18.500 8 19.500 4.500" stroke-width="3"/></svg>
</div>
<div id="pill2" class="abs"><svg style="position:absolute;left:6.400px;top:6px" width="12" height="34" viewBox="0 0 12 34" fill="none" stroke="#616161" stroke-width="1.300"><path d="M1.600 7.400 L6 3 L10.400 7.400 M1.600 26 L6 30.400 L10.400 26"/></svg></div>

<div id="hl" class="abs"></div>
</body>
</html>
